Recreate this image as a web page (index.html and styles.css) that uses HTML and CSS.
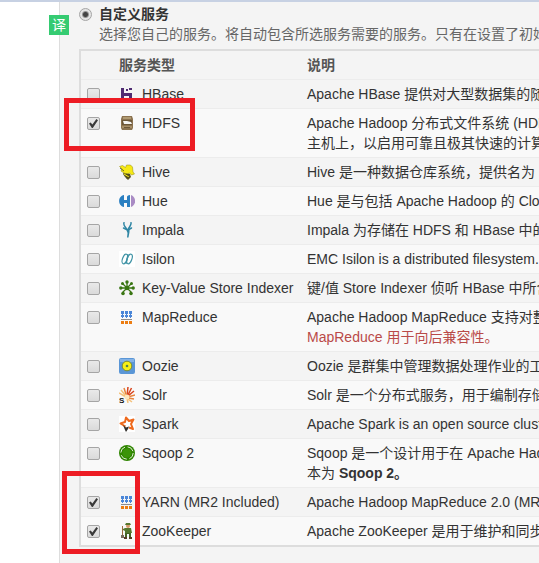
FILE: index.html
```html
<!DOCTYPE html>
<html lang="zh-CN">
<head>
<meta charset="utf-8">
<title>自定义服务</title>
<link rel="stylesheet" href="styles.css">
</head>
<body>
<svg class="sprite" aria-hidden="true">
  <symbol id="i-hbase" viewBox="0 0 16 16"><path fill="#4f2c72" d="M2 2h3v5h8v7h-3v-4H5v4H2z"/><path fill="#4f2c72" d="M7 3h2v2H7zM10 2h3v2h-3z"/></symbol>
  <symbol id="i-hdfs" viewBox="0 0 16 16"><path fill="#8b7350" d="M3 1h10l1 3v9l-1 2H3l-1-2V4z"/><path fill="#b09a72" d="M4 2h8v2H4z"/><path fill="#6c5738" d="M3 5h10v5H3z"/><path fill="#f4f4f2" d="M4 6h4l4 1 1 2H5z"/><path fill="#a78f67" d="M3 11h10v2H3z"/><path fill="#6c5738" d="M5 12h6v1H5z"/></symbol>
  <symbol id="i-hive" viewBox="0 0 16 16"><path fill="#5b551a" d="M5 8l6 2 1 3-3 3-3-3-2-3z"/><path fill="#f6e915" stroke="#8f8713" stroke-width=".5" d="M.5 2.500l3-1 3 2 1-2.500h4l2 2 .5 5 1.500 2-3 1-2-2-2.500 1L5 9 2 7 3 5z"/><path fill="none" stroke="#f6e915" d="M5 10l5 3"/><path fill="none" stroke="#4a4618" stroke-width=".8" d="M1 4l4 3M7 10l4 1M7 14l4-1"/></symbol>
  <symbol id="i-hue" viewBox="0 0 16 16"><path fill="#2a7fc1" d="M5 2v5h3V4c0-1 1-2 3-2v12H8v-4H5v4C-1.500 13-1.500 3 5 2z"/><path fill="#a98bc4" d="M12 2c5.500 2 5.500 10 0 12z"/></symbol>
  <symbol id="i-impala" viewBox="0 0 16 16"><g fill="none" stroke="#2f86a4" stroke-linecap="round"><path stroke-width="1.500" d="M5 .7C4 3 6.500 5 7.500 7M12 .7c.6 2-1.500 4-2.500 6"/><path stroke-width="1.500" d="M4.500 6l3 1.500h2.500L12.500 6"/></g><path fill="#2f86a4" d="M7 7h3.500v3L9.500 15.500H8L8.500 11z"/></symbol>
  <symbol id="i-isilon" viewBox="0 0 16 16"><path fill="#fff" d="M0 0h16v16H0z"/><g fill="none" stroke="#3f93a5" stroke-width="1.200"><ellipse cx="5.800" cy="8" rx="2.300" ry="5" transform="rotate(20 5.800 8)"/><ellipse cx="10.500" cy="8" rx="2.300" ry="5" transform="rotate(20 10.500 8)"/><path d="M9 3L7 13"/></g></symbol>
  <symbol id="i-key" viewBox="0 0 16 16"><path stroke="#397512" stroke-width="1.300" d="M8 2v6M2 8h12M3.500 3.500l9 9M12.500 3.500l-9 9"/><g fill="#397512"><circle cx="8" cy="8" r="2.200"/><circle cx="8" cy="2" r="1.700"/><circle cx="1.800" cy="8" r="1.700"/><circle cx="14.200" cy="8" r="1.700"/><circle cx="3.500" cy="3.500" r="1.500"/><circle cx="12.500" cy="3.500" r="1.500"/><circle cx="4" cy="13.500" r="1.800"/><circle cx="12" cy="13.500" r="1.800"/></g></symbol>
  <symbol id="i-mr" viewBox="0 0 16 16"><path fill="#4a86d8" d="M2 2h3v3H2zM6 2h3v3H6zM10 2h3v3h-3zM2 6h3v2H2zM6 6h3v2H6zM10 6h3v2h-3zM3 5h1v4H3zM7 5h1v4H7zM11 5h1v4h-1z"/><path fill="#8b8b8b" d="M2 10h11v1H2z"/><path fill="#ec7d12" d="M2 12h3v3H2zM6 12h3v3H6zM10 12h3v3h-3z"/></symbol>
  <symbol id="i-oozie" viewBox="0 0 16 16"><rect width="16" height="16" rx="2" fill="#5a96d6"/><path fill="#83b2e6" d="M1 1h14v3H1z"/><circle cx="8" cy="8" r="4.800" fill="#f7f016" stroke="#7b8a35"/><circle cx="8" cy="8" r="1.300" fill="#56834a"/></symbol>
  <symbol id="i-solr" viewBox="0 0 16 16"><g fill="none" stroke-width="1.500"><path stroke="#d8441d" d="M8 9l1-9M8.500 9l4-8M9 9l6-5"/><path stroke="#e7843d" d="M9 10l7-2M7.500 9L5 1M9 11l6 1"/><path stroke="#f5c179" d="M7 9L2 3M7 10L0 6M9 12l4 3M8 11l1 5"/></g><circle cx="8" cy="10" r="2.500" fill="#fbe6bd"/><text x="0" y="16" class="solr-letter">S</text></symbol>
  <symbol id="i-spark" viewBox="0 0 16 16"><path fill="#fff" d="M0 0h16v16H0z"/><path fill="none" stroke="#ee6a1e" stroke-width="2" stroke-linejoin="round" d="M6.500 10.500L1.500 7.500 6 6l1-4.500 3 3.500 4.500-1.500L12 8l2 5-4-1.500"/><path fill="#33302d" d="M4 9l3 2.500 3-1L9 13l-2 3-1-2z"/></symbol>
  <symbol id="i-sqoop" viewBox="0 0 16 16"><circle cx="8" cy="8" r="8" fill="#2f8500"/><circle cx="8" cy="8" r="6.200" fill="none" stroke="#e1efd6" stroke-width="1" stroke-dasharray="7 2.700"/><circle cx="8" cy="8" r="4.500" fill="#3b9408"/></symbol>
  <symbol id="i-zoo" viewBox="0 0 16 16"><path stroke="#9b6b3e" d="M3.500 3v10"/><path fill="#766a5d" d="M2 12h3v3H2z"/><circle cx="9" cy="3" r="2" fill="#d79a6b"/><path fill="#55772f" d="M6 2l1-2h4l1 2zM6 5h6l1 5h-1v1H6V8L4 7V6z"/><path fill="#456425" d="M6 10h6v4h-2v-3H8v3H6z"/><path fill="#573925" d="M5 14h3v2H5zM10 14h3v2h-3z"/></symbol>
</svg>
<main class="page">
  <section class="panel">
    <span class="badge">译</span>
    <div class="choice">
      <input type="radio" id="custom" name="services" class="radio" checked>
      <div class="choice-text">
        <label for="custom" class="choice-title">自定义服务</label>
        <p class="choice-note">选择您自己的服务。将自动包含所选服务需要的服务。只有在设置了初始</p>
      </div>
    </div>
    <div class="table-wrap">
      <table class="services">
        <thead>
          <tr><th class="pick"></th><th class="type">服务类型</th><th>说明</th></tr>
        </thead>
        <tbody>
          <tr><td><input type="checkbox" id="hbase"></td><td><label for="hbase"><svg class="icon"><use href="#i-hbase"/></svg>HBase</label></td><td>Apache HBase 提供对大型数据集的随</td></tr>
          <tr><td><input type="checkbox" id="hdfs" checked></td><td><label for="hdfs"><svg class="icon"><use href="#i-hdfs"/></svg>HDFS</label></td><td>Apache Hadoop 分布式文件系统 (HDF<br>主机上，以启用可靠且极其快速的计算</td></tr>
          <tr><td><input type="checkbox" id="hive"></td><td><label for="hive"><svg class="icon"><use href="#i-hive"/></svg>Hive</label></td><td>Hive 是一种数据仓库系统，提供名为</td></tr>
          <tr><td><input type="checkbox" id="hue"></td><td><label for="hue"><svg class="icon"><use href="#i-hue"/></svg>Hue</label></td><td>Hue 是与包括 Apache Hadoop 的 Clo</td></tr>
          <tr><td><input type="checkbox" id="impala"></td><td><label for="impala"><svg class="icon"><use href="#i-impala"/></svg>Impala</label></td><td>Impala 为存储在 HDFS 和 HBase 中的</td></tr>
          <tr><td><input type="checkbox" id="isilon"></td><td><label for="isilon"><svg class="icon"><use href="#i-isilon"/></svg>Isilon</label></td><td>EMC Isilon is a distributed filesystem.</td></tr>
          <tr><td><input type="checkbox" id="key"></td><td><label for="key"><svg class="icon"><use href="#i-key"/></svg>Key-Value Store Indexer</label></td><td>键/值 Store Indexer 侦听 HBase 中所含</td></tr>
          <tr><td><input type="checkbox" id="mr"></td><td><label for="mr"><svg class="icon"><use href="#i-mr"/></svg>MapReduce</label></td><td>Apache Hadoop MapReduce 支持对整<br><span class="warn">MapReduce 用于向后兼容性。</span></td></tr>
          <tr><td><input type="checkbox" id="oozie"></td><td><label for="oozie"><svg class="icon"><use href="#i-oozie"/></svg>Oozie</label></td><td>Oozie 是群集中管理数据处理作业的工</td></tr>
          <tr><td><input type="checkbox" id="solr"></td><td><label for="solr"><svg class="icon"><use href="#i-solr"/></svg>Solr</label></td><td>Solr 是一个分布式服务，用于编制存储</td></tr>
          <tr><td><input type="checkbox" id="spark"></td><td><label for="spark"><svg class="icon"><use href="#i-spark"/></svg>Spark</label></td><td>Apache Spark is an open source clust</td></tr>
          <tr><td><input type="checkbox" id="sqoop"></td><td><label for="sqoop"><svg class="icon"><use href="#i-sqoop"/></svg>Sqoop 2</label></td><td>Sqoop 是一个设计用于在 Apache Had<br>本为 <strong>Sqoop 2。</strong></td></tr>
          <tr><td><input type="checkbox" id="yarn" checked></td><td><label for="yarn"><svg class="icon"><use href="#i-mr"/></svg>YARN (MR2 Included)</label></td><td>Apache Hadoop MapReduce 2.0 (MR</td></tr>
          <tr><td><input type="checkbox" id="zoo" checked></td><td><label for="zoo"><svg class="icon"><use href="#i-zoo"/></svg>ZooKeeper</label></td><td>Apache ZooKeeper 是用于维护和同步</td></tr>
        </tbody>
      </table>
      <div class="mark mark-hdfs"></div>
      <div class="mark mark-yarn"></div>
    </div>
  </section>
</main>
</body>
</html>
```

FILE: styles.css
```css
* { box-sizing: border-box; }

body {
  margin: 0;
  background: #fff;
  color: #333;
  font: 14px/20px "Liberation Sans", "Noto Sans CJK SC", sans-serif;
}

.sprite { display: none; }

.page {
  min-height: 100vh;
  padding-left: 59px;
  border-top: 2px solid #c7d1e3;
  overflow: hidden;
  display: flex;
}

.panel {
  position: relative;
  flex: 1;
  min-width: 0;
  padding: 2px 0 16px 19px;
  border-left: 1px solid #ddd;
  background: #f4f4f4;
  white-space: nowrap;
}

.badge {
  position: absolute;
  left: -11px;
  top: 13px;
  width: 20px;
  height: 20px;
  background: #35cb72;
  color: #fff;
  text-align: center;
}

.choice { display: flex; gap: 7px; }
.choice-title { display: block; font-weight: bold; }
.choice-note { margin: 0; color: #666; }

input {
  appearance: none;
  display: block;
  flex: none;
  width: 13px;
  height: 13px;
  margin: 0;
  border: 1px solid #a5a5a5;
  border-radius: 2px;
  background: linear-gradient(#e9e9e9, #dadada);
}

.radio {
  margin-top: 4px;
  border-radius: 50%;
  background: radial-gradient(circle, #444 0 2px, #e4e4e4 4px);
}

input[type="checkbox"] { margin-top: 4px; }

input[type="checkbox"]:checked::before {
  content: "";
  display: block;
  width: 9px;
  height: 9px;
  margin: 1px;
  background: #3a3a3a;
  clip-path: polygon(0 50%, 18% 40%, 38% 62%, 82% 0, 100% 14%, 42% 100%, 32% 100%);
}

.table-wrap { position: relative; margin-top: 5px; }

.services {
  min-width: 100%;
  border: 2px solid #ddd;
  border-right: 0;
  border-spacing: 0;
}

.services th,
.services td {
  padding: 4px 6px;
  border-top: 1px solid #ececec;
  text-align: left;
  vertical-align: top;
}

.services th { border-top: 0; color: #555; }
.services .pick { width: 32px; min-width: 32px; }
.services .type { width: 188px; min-width: 188px; }
.services tr > :last-child { padding-right: 0; }
.services tbody tr:nth-child(even) { background: #f9f9f9; }

.services label { display: flex; align-items: center; gap: 7px; }
.icon { width: 16px; height: 16px; flex: none; }
.solr-letter { font: bold 8px "Liberation Sans", sans-serif; fill: #111; }
.warn { color: #b94a48; }

.mark {
  position: absolute;
  border: 5px solid #ed1c24;
  pointer-events: none;
}

.mark-hdfs { left: -15px; top: 49px; width: 131px; height: 53px; }
.mark-yarn { left: -17px; top: 422px; width: 78px; height: 83px; }
```
